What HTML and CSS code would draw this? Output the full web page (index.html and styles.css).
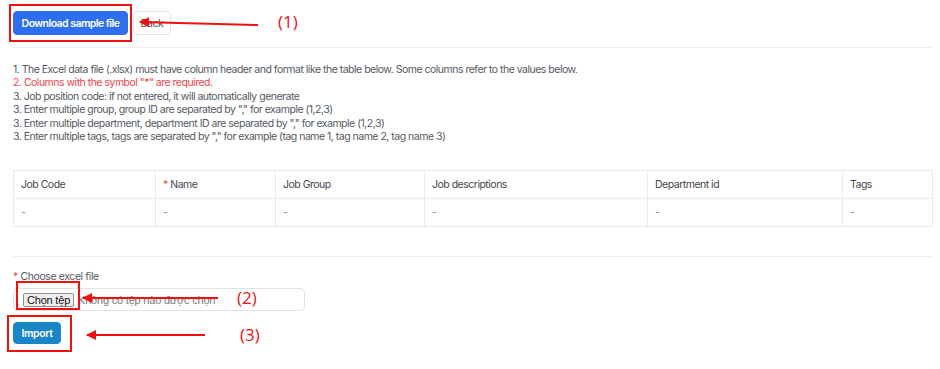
FILE: index.html
```html
<!DOCTYPE html>
<html>
<head>
<meta charset="utf-8">
<link rel="stylesheet" href="styles.css">
</head>
<body>
<div class="page">
  <div class="toolbar">
    <button class="btn btn-primary">Download sample file</button>
    <button class="btn btn-default">Back</button>
  </div>

  <div class="notes">
    <p>1. The Excel data file (.xlsx) must have column header and format like the table below. Some columns refer to the values below.</p>
    <p class="req">2. Columns with the symbol "*" are required.</p>
    <p>3. Job position code: if not entered, it will automatically generate</p>
    <p>3. Enter multiple group, group ID are separated by "," for example (1,2,3)</p>
    <p>3. Enter multiple department, department ID are separated by "," for example (1,2,3)</p>
    <p>3. Enter multiple tags, tags are separated by "," for example (tag name 1, tag name 2, tag name 3)</p>
  </div>

  <table class="sample">
    <colgroup>
      <col class="c1"><col class="c2"><col class="c3"><col class="c4"><col class="c5"><col class="c6">
    </colgroup>
    <thead>
      <tr>
        <th>Job Code</th>
        <th><span class="star">*</span> Name</th>
        <th>Job Group</th>
        <th>Job descriptions</th>
        <th>Department id</th>
        <th>Tags</th>
      </tr>
    </thead>
    <tbody>
      <tr>
        <td>-</td><td>-</td><td>-</td><td>-</td><td>-</td><td>-</td>
      </tr>
    </tbody>
  </table>

  <div class="upload">
    <label class="label"><span class="star">*</span> Choose excel file</label>
    <div class="file-box">
      <span class="file-btn">Chọn tệp</span>
      <span class="file-name">Không có tệp nào được chọn</span>
    </div>
    <button class="btn btn-import">Import</button>
  </div>

  <!-- annotations -->
  <div class="mark box1"></div>
  <div class="mark box2"></div>
  <div class="mark box3"></div>
  <div class="arrow a1"></div>
  <div class="arrow a2"></div>
  <div class="arrow a3"></div>
  <div class="num n1">(1)</div>
  <div class="num n2">(2)</div>
  <div class="num n3">(3)</div>
</div>
</body>
</html>
```

FILE: styles.css
```css
* { box-sizing: border-box; }
html, body { margin: 0; padding: 0; background: #fff; }
body {
  font-family: Inter, "Noto Sans", sans-serif;
  color: #4b4f56;
  width: 940px;
  height: 369px;
  overflow: hidden;
}
.page {
  position: relative;
  padding: 0 8px 0 13px;
  width: 940px;
}
.toolbar {
  display: flex;
  gap: 5px;
  padding: 11px 0 12px;
  border-bottom: 1px solid #eceef2;
}
.btn {
  font-family: Inter, sans-serif;
  font-size: 10.5px;
  height: 24px;
  border-radius: 4px;
  padding: 0;
  cursor: pointer;
  white-space: nowrap;
}
.btn-primary {
  background: #2e6ff0;
  border: 1px solid #2e6ff0;
  color: #fff;
  font-weight: 600;
  width: 115px;
  letter-spacing: -0.55px;
}
.btn-default {
  background: #fff;
  border: 1px solid #dfe3ea;
  color: #555;
  width: 38px;
  letter-spacing: -0.4px;
}
.notes {
  margin-top: 15px;
  font-size: 10.5px;
  line-height: 13.4px;
  color: #55595f;
  letter-spacing: -0.5px;
}
.notes p { margin: 0; }
.notes .req { color: #f0434a; }
.sample {
  margin-top: 27px;
  width: 919px;
  border-collapse: collapse;
  table-layout: fixed;
  font-size: 10.5px;
  letter-spacing: -0.5px;
  color: #44484e;
}
.c1 { width: 142px; } .c2 { width: 120px; } .c3 { width: 149px; }
.c4 { width: 223px; } .c5 { width: 195px; } .c6 { width: 90px; }
.sample th, .sample td {
  border: 1px solid #e7eaf0;
  height: 28px;
  padding: 0 7px;
  text-align: left;
  font-weight: 400;
}
.sample td { color: #8a8d92; }
.star { color: #f0434a; }
.upload {
  margin-top: 29px;
  border-top: 1px solid #eceef2;
  padding-top: 13px;
}
.label {
  display: block;
  font-size: 10.5px;
  line-height: 13px;
  color: #55595f;
  letter-spacing: -0.4px;
}
.file-box {
  margin-top: 5px;
  width: 292px;
  height: 23px;
  border: 1px solid #dde1e8;
  border-radius: 5px;
  display: flex;
  align-items: center;
  padding-left: 9px;
  font-family: "Liberation Sans", Arial, sans-serif;
  font-size: 11px;
}
.file-btn {
  display: inline-flex;
  align-items: center;
  height: 14px;
  padding: 0 3px;
  background: #efefef;
  border: 1px solid #8f8f8f;
  border-radius: 2px;
  color: #111;
  font-size: 11px;
  letter-spacing: -0.2px;
}
.file-name { margin-left: 4px; color: #777; letter-spacing: -0.2px; }
.btn-import {
  margin-top: 11px;
  background: #1a86c8;
  border: 1px solid #1a86c8;
  color: #fff;
  font-weight: 600;
  width: 48px;
  height: 22px;
  display: block;
  letter-spacing: -0.4px;
}

/* annotations overlaid on the screenshot */
.mark {
  position: absolute;
  border: 2px solid #f01010;
}
.box1 { left: 9px; top: 4px; width: 123px; height: 38px; }
.box2 { left: 16px; top: 281px; width: 64px; height: 29px; }
.box3 { left: 7px; top: 315px; width: 65px; height: 37px; }
.arrow {
  position: absolute;
  height: 2px;
  background: #f01010;
}
.arrow::before {
  content: "";
  position: absolute;
  left: -1px;
  top: -4px;
  border-right: 10px solid #f01010;
  border-top: 5px solid transparent;
  border-bottom: 5px solid transparent;
}
.a1 { left: 140px; top: 21px; width: 118px; transform: rotate(1.5deg); transform-origin: left center; }
.a2 { left: 83px; top: 297px; width: 135px; }
.a3 { left: 87px; top: 334px; width: 118px; }
.num {
  position: absolute;
  color: #f01010;
  font-family: "Open Sans", "Liberation Sans", sans-serif;
  font-size: 17px;
  line-height: 20px;
}
.n1 { left: 278px; top: 12px; }
.n2 { left: 237px; top: 288px; }
.n3 { left: 240px; top: 325px; }
```
